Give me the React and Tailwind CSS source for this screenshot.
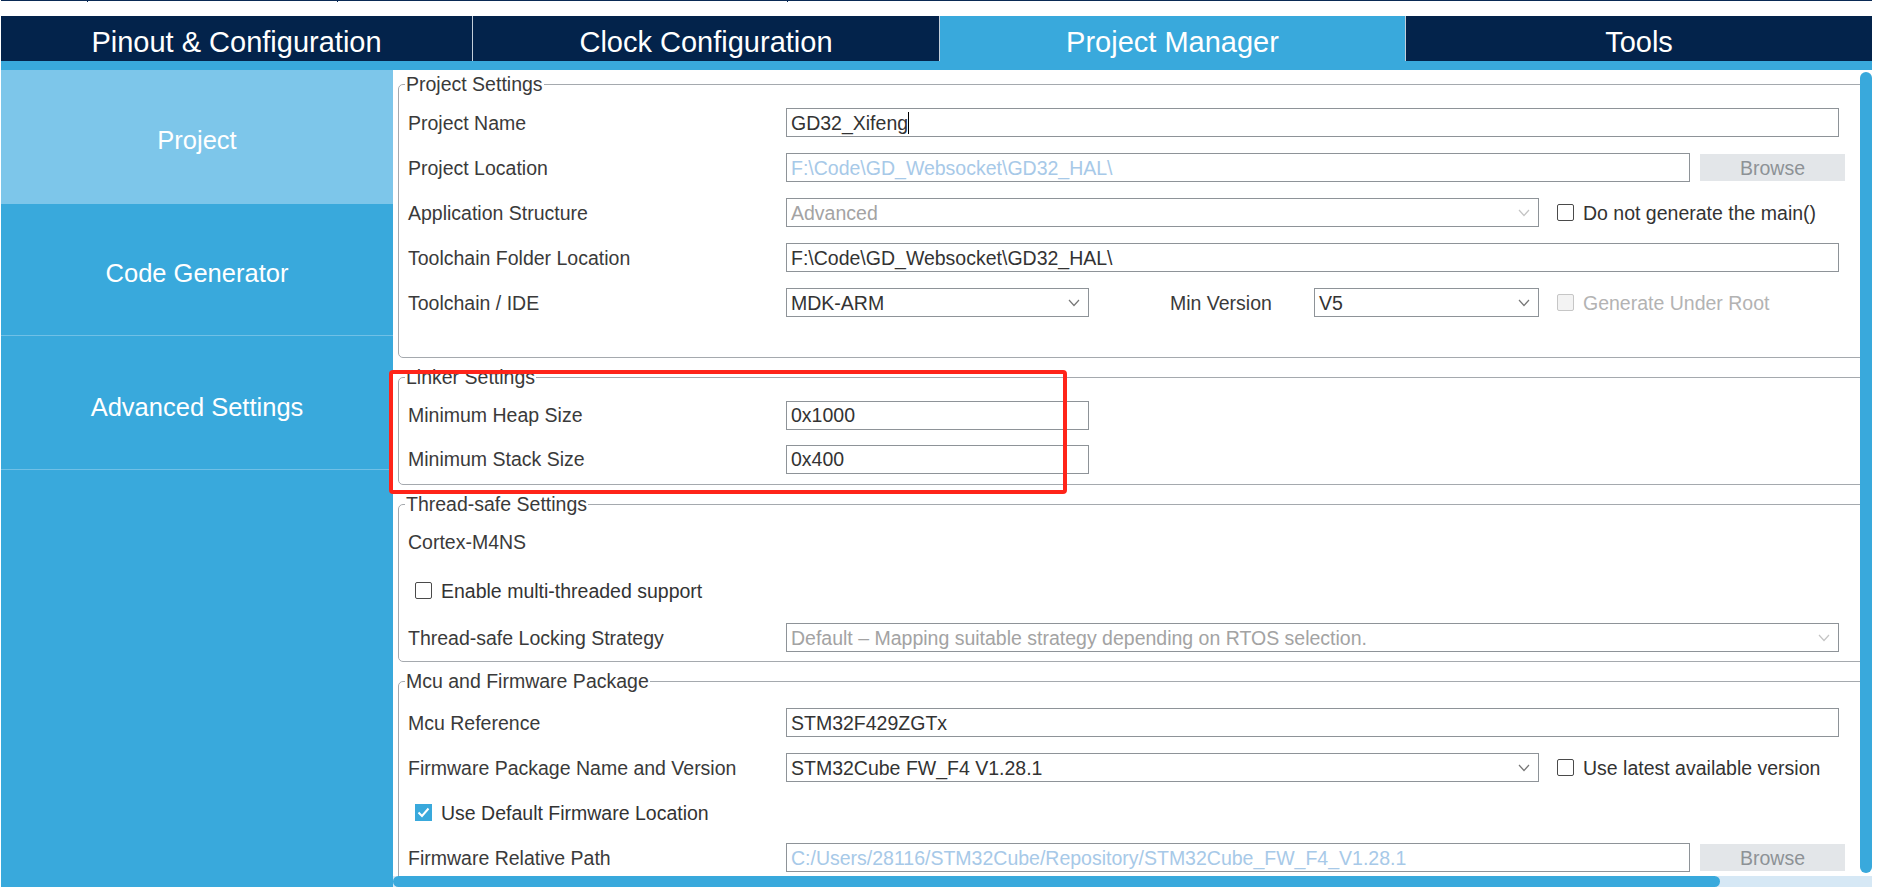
import React from "react";

function Chevron({ color = "#7a7a7a" }) {
  return (
    <svg width="12" height="8" viewBox="0 0 12 8" className="shrink-0">
      <path d="M1 1 L6 6.5 L11 1" fill="none" stroke={color} strokeWidth="1.2" />
    </svg>
  );
}

function Checkbox({ checked, disabled }) {
  if (checked) {
    return (
      <span className="w-[17px] h-[17px] bg-[#39a9dc] flex items-center justify-center shrink-0">
        <svg width="13" height="11" viewBox="0 0 13 11">
          <path d="M1.5 5.5 L5 9 L11.5 1.5" stroke="white" strokeWidth="2" fill="none" />
        </svg>
      </span>
    );
  }
  return (
    <span
      className={
        disabled
          ? "w-[17px] h-[17px] border border-[#c6c6c6] bg-[#f3f3f3] rounded-[2px] shrink-0"
          : "w-[17px] h-[17px] border-[1.5px] border-[#4a4a4a] bg-white rounded-[2px] shrink-0"
      }
    />
  );
}

function TextBox({ w, value, tone = "normal", caret }) {
  const color =
    tone === "muted" ? "text-[#a7c9e8]" : tone === "gray" ? "text-[#a3a3a3]" : "text-[#333333]";
  return (
    <div
      className={`${w} h-[29px] shrink-0 border border-[#8e9398] bg-white flex items-center pl-[4px] overflow-hidden whitespace-nowrap ${color}`}
    >
      <span>{value}</span>
      {caret && <span className="w-[1px] h-[22px] bg-black" />}
    </div>
  );
}

function Select({ w, value, disabled }) {
  return (
    <div
      className={`${w} h-[29px] shrink-0 border border-[#8e9398] bg-white flex items-center justify-between pl-[4px] pr-[8px] whitespace-nowrap ${
        disabled ? "text-[#a3a3a3]" : "text-[#333333]"
      }`}
    >
      <span>{value}</span>
      <Chevron color={disabled ? "#c4c4c4" : "#777777"} />
    </div>
  );
}

function Browse() {
  return (
    <div className="ml-[10px] w-[145px] h-[27px] bg-[#e3e6e9] text-[#8d9296] flex items-center justify-center shrink-0">
      Browse
    </div>
  );
}

function CheckLabel({ checked, disabled, label, className = "" }) {
  return (
    <div className={`flex items-center gap-[9px] whitespace-nowrap ${className}`}>
      <Checkbox checked={checked} disabled={disabled} />
      <span className={disabled ? "text-[#b3b3b3]" : "text-[#333333]"}>{label}</span>
    </div>
  );
}

function Row({ h = "h-[45px]", label, children }) {
  return (
    <div className={`flex items-center ${h}`}>
      <div className="w-[378px] shrink-0 whitespace-nowrap text-[#3a3a3a]">{label}</div>
      {children}
    </div>
  );
}

function Group({ title, className = "", bodyClass = "", children }) {
  return (
    <fieldset className={`border border-[#a5a9ae] rounded-[5px] pl-[6px] ${className}`}>
      <legend className="px-[1px] leading-[22px] text-[#3a3a3a]">{title}</legend>
      <div className={`pl-[3px] ${bodyClass}`}>{children}</div>
    </fieldset>
  );
}

export default function App() {
  const navy = "bg-[#03234b]";
  return (
    <div className="relative w-[1882px] h-[895px] bg-white overflow-hidden pl-[1px] font-['Liberation_Sans',Arial,sans-serif]">
      {/* thin top line */}
      <div className="flex h-[2px] w-[1871px]">
        <div className="w-[87px] border-t border-r border-[#0a2a55]" />
        <div className="w-[250px] border-t border-r border-[#0a2a55]" />
        <div className="w-[450px] border-t border-r border-[#0a2a55]" />
        <div className="flex-1 border-t border-[#0a2a55]" />
      </div>
      <div className="h-[14px]" />

      {/* main tabs */}
      <div className="flex h-[45px] w-[1871px] text-white text-[29px] leading-none">
        <div className={`w-[471px] ${navy} flex items-center justify-center pt-[7px]`}>Pinout &amp; Configuration</div>
        <div className="w-[1px] bg-[#c3ced9]" />
        <div className={`w-[466px] ${navy} flex items-center justify-center pt-[7px]`}>Clock Configuration</div>
        <div className="w-[1px] bg-[#c3ced9]" />
        <div className="w-[465px] bg-[#39a9dc] flex items-center justify-center pt-[7px]">Project Manager</div>
        <div className="w-[1px] bg-[#c3ced9]" />
        <div className={`w-[466px] ${navy} flex items-center justify-center pt-[7px]`}>Tools</div>
      </div>
      <div className="h-[9px] w-[1871px] bg-[#39a9dc]" />

      {/* body */}
      <div className="flex h-[817px] w-[1871px]">
        {/* sidebar */}
        <div className="w-[392px] shrink-0 bg-[#39a9dc] flex flex-col text-white text-[25.5px] leading-none">
          <div className="h-[134px] bg-[#7dc6ea] flex items-center justify-center pt-[7px]">Project</div>
          <div className="h-[131px] flex items-center justify-center pt-[8px]">Code Generator</div>
          <div className="h-[1px] bg-[#70c0e6]" />
          <div className="h-[133px] flex items-center justify-center pt-[10px]">Advanced Settings</div>
          <div className="h-[1px] bg-[#70c0e6]" />
        </div>

        {/* main panel */}
        <div className="flex-1 flex flex-col min-w-0">
          <div className="flex flex-1 min-h-0">
            <div className="flex-1 overflow-hidden bg-white">
              <div className="w-[1620px] pl-[5px] pt-[3px] text-[19.5px] leading-[22px] text-[#333333]">
                <Group title="Project Settings" className="pb-[32px]" bodyClass="pt-[5px]">
                  <Row label="Project Name">
                    <TextBox w="w-[1053px]" value="GD32_Xifeng" caret />
                  </Row>
                  <Row label="Project Location">
                    <TextBox w="w-[904px]" value="F:\Code\GD_Websocket\GD32_HAL\" tone="muted" />
                    <Browse />
                  </Row>
                  <Row label="Application Structure">
                    <Select w="w-[753px]" value="Advanced" disabled />
                    <CheckLabel label="Do not generate the main()" className="ml-[18px]" />
                  </Row>
                  <Row label="Toolchain Folder Location">
                    <TextBox w="w-[1053px]" value="F:\Code\GD_Websocket\GD32_HAL\" />
                  </Row>
                  <Row label="Toolchain / IDE">
                    <Select w="w-[303px]" value="MDK-ARM" />
                    <div className="ml-[81px] w-[144px] shrink-0 text-[#3a3a3a]">Min Version</div>
                    <Select w="w-[225px]" value="V5" />
                    <CheckLabel label="Generate Under Root" disabled className="ml-[18px]" />
                  </Row>
                </Group>

                <Group title="Linker Settings" className="mt-[8px] pb-[3px]" bodyClass="pt-[5px]">
                  <Row h="h-[44px]" label="Minimum Heap Size">
                    <TextBox w="w-[303px]" value="0x1000" />
                  </Row>
                  <Row h="h-[44px]" label="Minimum Stack Size">
                    <TextBox w="w-[303px]" value="0x400" />
                  </Row>
                </Group>

                <Group title="Thread-safe Settings" className="mt-[8px] pb-[1px]" bodyClass="pt-[2px]">
                  <div className="h-[49px] flex items-center text-[#3a3a3a]">Cortex-M4NS</div>
                  <div className="h-[49px] flex items-center">
                    <CheckLabel label="Enable multi-threaded support" className="ml-[7px]" />
                  </div>
                  <Row label="Thread-safe Locking Strategy">
                    <Select
                      w="w-[1053px]"
                      value="Default – Mapping suitable strategy depending on RTOS selection."
                      disabled
                    />
                  </Row>
                </Group>

                <Group title="Mcu and Firmware Package" className="mt-[8px] pb-[20px]" bodyClass="pt-[8px]">
                  <Row label="Mcu Reference">
                    <TextBox w="w-[1053px]" value="STM32F429ZGTx" />
                  </Row>
                  <Row label="Firmware Package Name and Version">
                    <Select w="w-[753px]" value="STM32Cube FW_F4 V1.28.1" />
                    <CheckLabel label="Use latest available version" className="ml-[18px]" />
                  </Row>
                  <div className="h-[45px] flex items-center">
                    <CheckLabel checked label="Use Default Firmware Location" className="ml-[7px]" />
                  </div>
                  <Row label="Firmware Relative Path">
                    <TextBox
                      w="w-[904px]"
                      value="C:/Users/28116/STM32Cube/Repository/STM32Cube_FW_F4_V1.28.1"
                      tone="muted"
                    />
                    <Browse />
                  </Row>
                </Group>
              </div>
            </div>
            {/* vertical scrollbar */}
            <div className="w-[12px] shrink-0 bg-white flex flex-col pt-[2px] pb-[3px]">
              <div className="flex-1 rounded-full bg-[#39a9dc]" />
            </div>
          </div>
          {/* horizontal scrollbar */}
          <div className="h-[11px] flex shrink-0">
            <div className="w-[1467px] bg-[#d6e8f5] flex">
              <div className="w-[1327px] rounded-full bg-[#39a9dc]" />
            </div>
            <div className="flex-1 bg-[#d6e8f5]" />
          </div>
        </div>
      </div>

      {/* red annotation box */}
      <div className="absolute left-[389px] top-[370px] w-[678px] h-[124px] border-[4px] border-[#ff2419] rounded-[4px] pointer-events-none" />
    </div>
  );
}
